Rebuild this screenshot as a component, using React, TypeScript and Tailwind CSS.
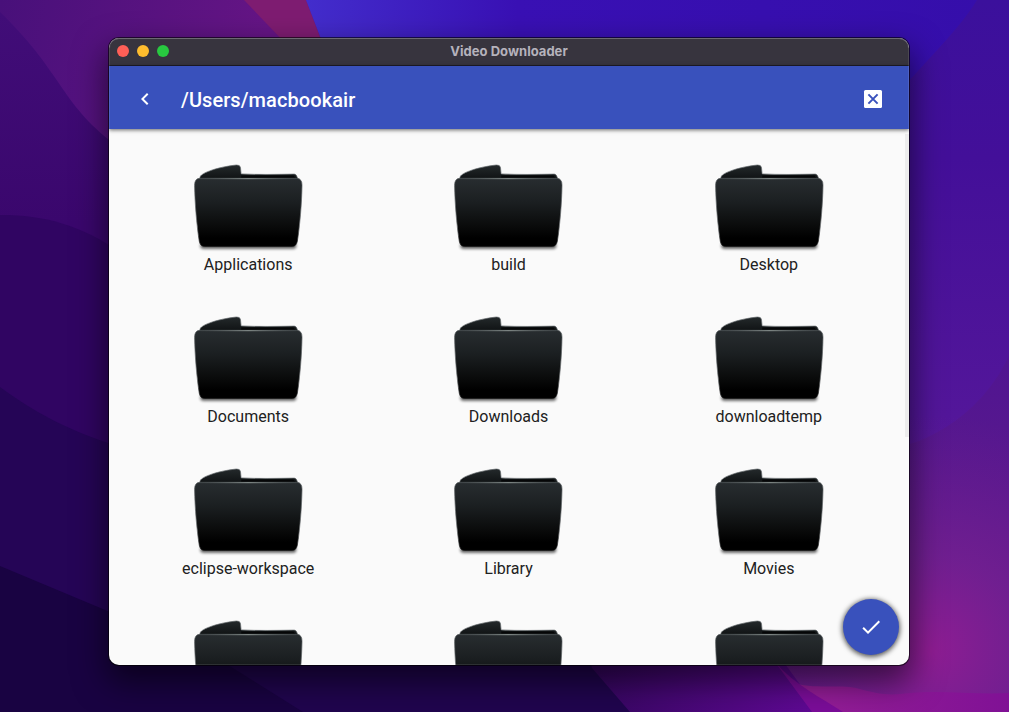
import { MdChevronLeft, MdCheck } from "react-icons/md";

const folders = [
  "Applications", "build", "Desktop",
  "Documents", "Downloads", "downloadtemp",
  "eclipse-workspace", "Library", "Movies",
  "", "", "",
];

function Wallpaper() {
  return (
    <svg className="absolute inset-0 h-full w-full" viewBox="0 0 1009 712" preserveAspectRatio="none" aria-hidden="true">
      <defs>
        <linearGradient id="base" x1="0" y1="0" x2="0" y2="1">
          <stop offset="0" stopColor="#360ea8" />
          <stop offset="0.25" stopColor="#430f96" />
          <stop offset="0.6" stopColor="#55178f" />
          <stop offset="1" stopColor="#6b1792" />
        </linearGradient>
        <linearGradient id="topLeft" gradientUnits="userSpaceOnUse" x1="0" y1="0" x2="260" y2="60">
          <stop offset="0" stopColor="#48107a" />
          <stop offset="1" stopColor="#651585" />
        </linearGradient>
        <linearGradient id="left" x1="0" y1="0" x2="0" y2="1">
          <stop offset="0" stopColor="#410d78" />
          <stop offset="0.3" stopColor="#3a076d" />
          <stop offset="1" stopColor="#38066d" />
        </linearGradient>
        <linearGradient id="blue" x1="0" y1="0" x2="1" y2="0">
          <stop offset="0" stopColor="#432dcc" />
          <stop offset="0.3" stopColor="#3910b4" />
          <stop offset="1" stopColor="#350eaa" />
        </linearGradient>
        <linearGradient id="right" x1="0" y1="0" x2="0" y2="1">
          <stop offset="0" stopColor="#3b109c" />
          <stop offset="0.35" stopColor="#430f99" />
          <stop offset="1" stopColor="#55179a" />
        </linearGradient>
        <radialGradient id="glow" gradientUnits="userSpaceOnUse" cx="930" cy="650" r="235">
          <stop offset="0" stopColor="#8f1d93" />
          <stop offset="0.4" stopColor="#752190" stopOpacity="0.75" />
          <stop offset="1" stopColor="#68208b" stopOpacity="0" />
        </radialGradient>
        <linearGradient id="bottom" gradientUnits="userSpaceOnUse" x1="592" y1="665" x2="812" y2="712">
          <stop offset="0" stopColor="#35065f" />
          <stop offset="1" stopColor="#5f0994" />
        </linearGradient>
        <linearGradient id="wave" gradientUnits="userSpaceOnUse" x1="820" y1="0" x2="1009" y2="0">
          <stop offset="0" stopColor="#931d96" />
          <stop offset="1" stopColor="#801195" />
        </linearGradient>
      </defs>
      <rect width="1009" height="712" fill="url(#base)" />
      <path d="M0 0H340V240H0Z" fill="url(#topLeft)" />
      <path d="M244 0H306L340 90H330Z" fill="#7e1c71" />
      <path d="M306 0H1009V140H360Z" fill="url(#blue)" />
      <path d="M977 0C962 25 935 52 908 82L880 120V450C940 445 990 400 1009 355V0Z" fill="url(#right)" />
      <path d="M0 12C65 75 60 105 120 148V712H0Z" fill="url(#left)" />
      <path d="M0 215C45 215 80 225 120 252V712H0Z" fill="#300562" />
      <path d="M0 387C45 420 80 434 120 447V712H0Z" fill="#250556" />
      <path d="M0 566L110 612L240 670L310 712H0Z" fill="#190342" />
      <rect x="690" y="410" width="319" height="302" fill="url(#glow)" />
      <path d="M220 660L303 712H645L590 655Z" fill="#20054e" />
      <path d="M588 650L592 668L630 712H820L775 650Z" fill="url(#bottom)" />
      <path d="M790 682C815 690 838 684 856 688C878 694 888 696 910 693C945 690 975 695 1009 693V712H820Z" fill="url(#wave)" />
      <path d="M775 662C795 685 820 697 843 712H812Z" fill="#7b0d99" />
    </svg>
  );
}

function Folder() {
  return (
    <svg className="block h-[96px] w-[120px]" viewBox="0 0 120 96" aria-hidden="true">
      <defs>
        <linearGradient id="front" x1="0" y1="0" x2="0" y2="1">
          <stop offset="0" stopColor="#282d30" />
          <stop offset="0.35" stopColor="#1b1f21" />
          <stop offset="0.7" stopColor="#0a0b0b" />
          <stop offset="0.88" stopColor="#000" />
        </linearGradient>
        <linearGradient id="shine" gradientUnits="userSpaceOnUse" x1="12" y1="0" x2="108" y2="0">
          <stop offset="0" stopColor="#50585a" stopOpacity="0.3" />
          <stop offset="0.5" stopColor="#8d9693" />
          <stop offset="1" stopColor="#50585a" stopOpacity="0.3" />
        </linearGradient>
        <linearGradient id="edge" x1="0" y1="0" x2="0" y2="1">
          <stop offset="0" stopColor="#4c5254" />
          <stop offset="0.7" stopColor="#707476" />
          <stop offset="1" stopColor="#000" />
        </linearGradient>
        <linearGradient id="tab" x1="0" y1="0" x2="0" y2="1">
          <stop offset="0" stopColor="#24292b" />
          <stop offset="1" stopColor="#0c0f10" />
        </linearGradient>
        <filter id="soft" x="-10%" y="-100%" width="120%" height="300%">
          <feGaussianBlur stdDeviation="1.8" />
        </filter>
      </defs>
      <g transform="translate(0.3 0.3)">
        <rect x="12" y="81.5" width="96" height="6" rx="3" fill="#000" opacity="0.65" filter="url(#soft)" />
        <path d="M11.7 20V16C12 14.2 14 13 17 11.4C25 7.8 35 5.2 48 3.7Q51.8 3.3 52.2 6.5L52.8 12.6C70 13.5 88 13.1 106 12.8Q108 12.8 109 16V20Z" fill="url(#tab)" stroke="#666c6e" strokeWidth="0.7" />
        <path d="M53 14.2H105L107 16.8H53Z" fill="#050607" />
        <path d="M11.2 17H108.8Q113.8 17.5 113.7 24C113.4 43 111.5 65 109 80Q108 85 104 85H16Q12 85 11 80C8.5 65 6.6 43 6.3 24Q6.2 17.5 11.2 17Z" fill="url(#front)" stroke="url(#edge)" strokeWidth="0.7" />
        <path d="M12 17.4H108" stroke="url(#shine)" strokeWidth="1" />
      </g>
    </svg>
  );
}

function FolderItem({ name }: { name: string }) {
  return (
    <button type="button" className="flex h-[152px] flex-col items-center">
      <Folder />
      {name && <span className="mt-[-2px] text-[16px] leading-[19px] text-[#212121]">{name}</span>}
    </button>
  );
}

export default function App() {
  return (
    <main className="relative h-[712px] w-[1009px] overflow-hidden font-['Roboto',sans-serif]">
      <Wallpaper />
      <div className="relative pt-[38px] pl-[109px]">
        <section className="relative flex h-[627px] w-[800px] flex-col overflow-hidden rounded-[10px] bg-[#fafafa] shadow-[0_0_0_1px_rgba(0,0,0,0.6),0_14px_32px_3px_rgba(0,0,0,0.55)]">
          <header className="grid h-7 shrink-0 grid-cols-[1fr_auto_1fr] items-center rounded-t-[10px] border-b border-[#1f1d29] bg-[#37343e] px-2 pb-[1px] shadow-[inset_0_1px_0_#5b5860]">
            <div className="flex gap-2">
              <span className="size-3 rounded-full bg-[#ff5f57]" />
              <span className="size-3 rounded-full bg-[#febc2e]" />
              <span className="size-3 rounded-full bg-[#28c840]" />
            </div>
            <h1 className="pb-[1px] font-['Inter',sans-serif] text-[13px] leading-4 font-bold tracking-[0.03px] text-[#b5b2bc]">Video Downloader</h1>
          </header>
          <div className="z-10 flex h-[63px] shrink-0 items-center bg-[#3951bc] px-6 pt-[3px] shadow-[0_1px_4px_rgba(0,0,0,0.6)]">
            <MdChevronLeft className="size-6 text-white" />
            <h2 className="ml-6 grow pt-[1px] text-[20px] leading-6 font-medium tracking-[0.08px] text-white">/Users/macbookair</h2>
            <svg className="size-6" viewBox="0 0 24 24" aria-label="Close">
              <rect x="3" y="3" width="18" height="18" rx="1.5" fill="white" />
              <path d="M7.4 7.4L16.6 16.6M16.6 7.4L7.4 16.6" stroke="#3951bc" strokeWidth="2" />
            </svg>
          </div>
          <div className="grid w-[790px] grow auto-rows-[152px] grid-cols-3 self-start overflow-hidden pt-[32px] pl-[9px]">
            {folders.map((name, index) => <FolderItem key={index} name={name} />)}
          </div>
          <div className="absolute top-[96px] right-0 h-[303px] w-1 bg-[#ececec]" />
          <button type="button" aria-label="Confirm" className="absolute right-[10px] bottom-[10px] flex size-14 items-center justify-center rounded-full bg-[#3951bc] shadow-[0_1px_5px_1px_rgba(0,0,0,0.65)]">
            <MdCheck className="size-6 text-white" />
          </button>
          <div className="pointer-events-none absolute inset-0 z-20 rounded-[10px] border border-white/10" />
        </section>
      </div>
    </main>
  );
}
